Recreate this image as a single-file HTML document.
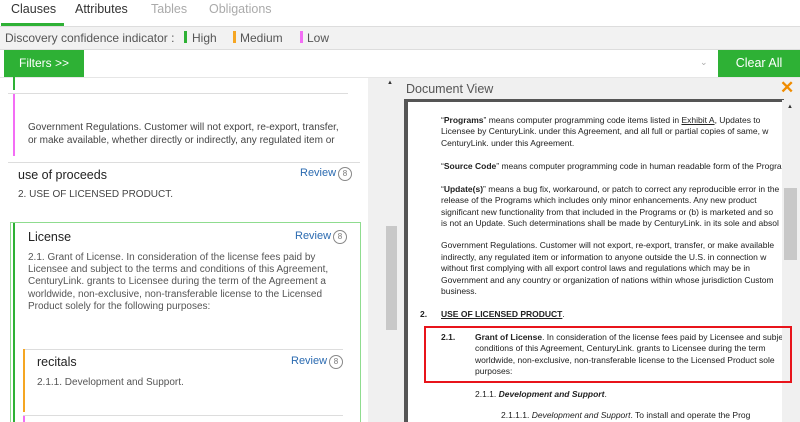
<!DOCTYPE html>
<html><head><meta charset="utf-8"><style>
*{margin:0;padding:0;box-sizing:border-box}
html,body{width:800px;height:422px;overflow:hidden}
body{background:#fff;font-family:"Liberation Sans",sans-serif;position:relative;color:#333}
.a{position:absolute;white-space:nowrap}
.tab{font-size:12.5px;top:2px}
.rv{color:#2a6ab0;font-size:11px}
.ic{width:14px;height:14px;border:1.5px solid #888;border-radius:50%;font-size:8px;color:#777;text-align:center;line-height:11px}
.doc{font-size:8.5px;color:#222;left:441px;white-space:nowrap}
</style></head><body>
<div class="a tab" style="left:11px;color:#333">Clauses</div>
<div class="a tab" style="left:75px;color:#333">Attributes</div>
<div class="a tab" style="left:151px;color:#aaa">Tables</div>
<div class="a tab" style="left:209px;color:#aaa">Obligations</div>
<div class="a" style="left:1px;top:23px;width:63px;height:3px;background:#2eb135"></div>
<div class="a" style="left:0;top:26px;width:800px;height:24px;background:#f2f2f2;border-top:1px solid #ddd;border-bottom:1px solid #ddd"></div>
<div class="a" style="left:5px;top:31px;font-size:12px;color:#555">Discovery confidence indicator :</div>
<div class="a" style="left:184px;top:31px;width:3px;height:12px;background:#2eb135"></div>
<div class="a" style="left:192px;top:31px;font-size:12px;color:#555">High</div>
<div class="a" style="left:233px;top:31px;width:3px;height:12px;background:#f5a623"></div>
<div class="a" style="left:240px;top:31px;font-size:12px;color:#555">Medium</div>
<div class="a" style="left:300px;top:31px;width:3px;height:12px;background:#f36df5"></div>
<div class="a" style="left:307px;top:31px;font-size:12px;color:#555">Low</div>
<div class="a" style="left:4px;top:50px;width:80px;height:27px;background:#2eb135;color:#fff;font-size:12px;text-align:center;line-height:27px">Filters &gt;&gt;</div>
<div class="a" style="left:718px;top:50px;width:82px;height:27px;background:#2eb135;color:#fff;font-size:12.5px;text-align:center;line-height:27px">Clear All</div>
<div class="a" style="left:700px;top:57px;font-size:9px;color:#aaa">&#8964;</div>
<div class="a" style="left:0;top:77px;width:800px;height:1px;background:#e6e6e6"></div>
<div class="a" style="left:368px;top:78px;width:32px;height:344px;background:#f0f0f0"></div>
<div class="a" style="left:387px;top:80px;font-size:6px;color:#333">&#9650;</div>
<div class="a" style="left:386px;top:226px;width:11px;height:104px;background:#c8c8c8"></div>
<div class="a" style="left:13px;top:77px;width:2px;height:13px;background:#2eb135"></div>
<div class="a" style="left:8px;top:93px;width:340px;height:1px;background:#ddd"></div>
<div class="a" style="left:13px;top:94px;width:2px;height:62px;background:#f36df5"></div>
<div class="a" style="left:28px;top:122px;font-size:10px;line-height:12.5px;color:#444">Government Regulations. Customer will not export, re-export, transfer,<br>or make available, whether directly or indirectly, any regulated item or</div>
<div class="a" style="left:8px;top:162px;width:352px;height:1px;background:#ddd"></div>
<div class="a" style="left:18px;top:168px;font-size:12.5px;color:#222">use of proceeds</div>
<div class="a rv" style="left:300px;top:167px">Review</div>
<div class="a ic" style="left:338px;top:167px">8</div>
<div class="a" style="left:18px;top:189px;font-size:10px;color:#444">2. USE OF LICENSED PRODUCT.</div>
<div class="a" style="left:10px;top:222px;width:351px;height:210px;border:1px solid #8fdc8f"></div>
<div class="a" style="left:13px;top:223px;width:2px;height:199px;background:#2eb135"></div>
<div class="a" style="left:28px;top:230px;font-size:12.5px;color:#222">License</div>
<div class="a rv" style="left:295px;top:230px">Review</div>
<div class="a ic" style="left:333px;top:230px">8</div>
<div class="a" style="left:28px;top:252px;font-size:10px;line-height:12.2px;color:#555">2.1. Grant of License. In consideration of the license fees paid by<br>Licensee and subject to the terms and conditions of this Agreement,<br>CenturyLink. grants to Licensee during the term of the Agreement a<br>worldwide, non-exclusive, non-transferable license to the Licensed<br>Product solely for the following purposes:</div>
<div class="a" style="left:23px;top:349px;width:320px;height:1px;background:#ddd"></div>
<div class="a" style="left:23px;top:349px;width:2px;height:63px;background:#f5a623"></div>
<div class="a" style="left:37px;top:355px;font-size:12.5px;color:#222">recitals</div>
<div class="a rv" style="left:291px;top:355px">Review</div>
<div class="a ic" style="left:329px;top:355px">8</div>
<div class="a" style="left:37px;top:377px;font-size:10px;color:#555">2.1.1. Development and Support.</div>
<div class="a" style="left:23px;top:415px;width:320px;height:1px;background:#ddd"></div>
<div class="a" style="left:23px;top:416px;width:2px;height:6px;background:#f36df5"></div>
<div class="a" style="left:400px;top:78px;width:400px;height:344px;background:#f0f0f0"></div>
<div class="a" style="left:406px;top:82px;font-size:12.5px;color:#555">Document View</div>
<div class="a" style="left:780px;top:78px;font-size:17px;color:#f08c00;font-weight:bold">&#10005;</div>
<div class="a" style="left:404px;top:99px;width:380px;height:323px;background:#fff;border-top:3px solid #555;border-left:4px solid #555"></div>
<div class="a" style="left:782px;top:100px;width:18px;height:322px;background:#f0f0f0"></div>
<div class="a" style="left:787px;top:104px;font-size:6px;color:#333">&#9650;</div>
<div class="a" style="left:784px;top:188px;width:13px;height:72px;background:#c8c8c8"></div>
<div class="a doc" style="top:115px;line-height:11.4px;width:341px;overflow:hidden">“<b>Programs</b>” means computer programming code items listed in <u>Exhibit A</u>, Updates to<br>Licensee by CenturyLink. under this Agreement, and all full or partial copies of same, w<br>CenturyLink. under this Agreement.</div>
<div class="a doc" style="top:161px;width:341px;overflow:hidden">“<b>Source Code</b>” means computer programming code in human readable form of the Progra</div>
<div class="a doc" style="top:184px;line-height:11.4px;width:341px;overflow:hidden">“<b>Update(s)</b>” means a bug fix, workaround, or patch to correct any reproducible error in the<br>release of the Programs which includes only minor enhancements. Any new product<br>significant new functionality from that included in the Programs or (b) is marketed and so<br>is not an Update.  Such determinations shall be made by CenturyLink. in its sole and absol</div>
<div class="a doc" style="top:240px;line-height:11.6px;width:341px;overflow:hidden">Government Regulations. Customer will not export, re-export, transfer, or make available<br>indirectly, any regulated item or information to anyone outside the U.S. in connection w<br>without first complying with all export control laws and regulations which may be in<br>Government and any country or organization of nations within whose jurisdiction Custom<br>business.</div>
<div class="a doc" style="left:420px;top:309px"><b>2.</b></div>
<div class="a doc" style="top:309px"><b><u>USE OF LICENSED PRODUCT</u></b>.</div>
<div class="a doc" style="left:441px;top:332px"><b>2.1.</b></div>
<div class="a doc" style="left:475px;top:332px;line-height:11.4px;width:307px;overflow:hidden"><b>Grant of License</b>.  In consideration of the license fees paid by Licensee and subje<br>conditions of this Agreement, CenturyLink. grants to Licensee during the term<br>worldwide, non-exclusive, non-transferable license to the Licensed Product sole<br>purposes:</div>
<div class="a" style="left:424px;top:326px;width:368px;height:57px;border:2px solid #e8141b"></div>
<div class="a doc" style="left:475px;top:389px">2.1.1.  <b><i>Development and Support</i></b>.</div>
<div class="a doc" style="left:501px;top:410px;width:281px;overflow:hidden">2.1.1.1. <i>Development and Support</i>. To install and operate the Prog</div>
</body></html>
